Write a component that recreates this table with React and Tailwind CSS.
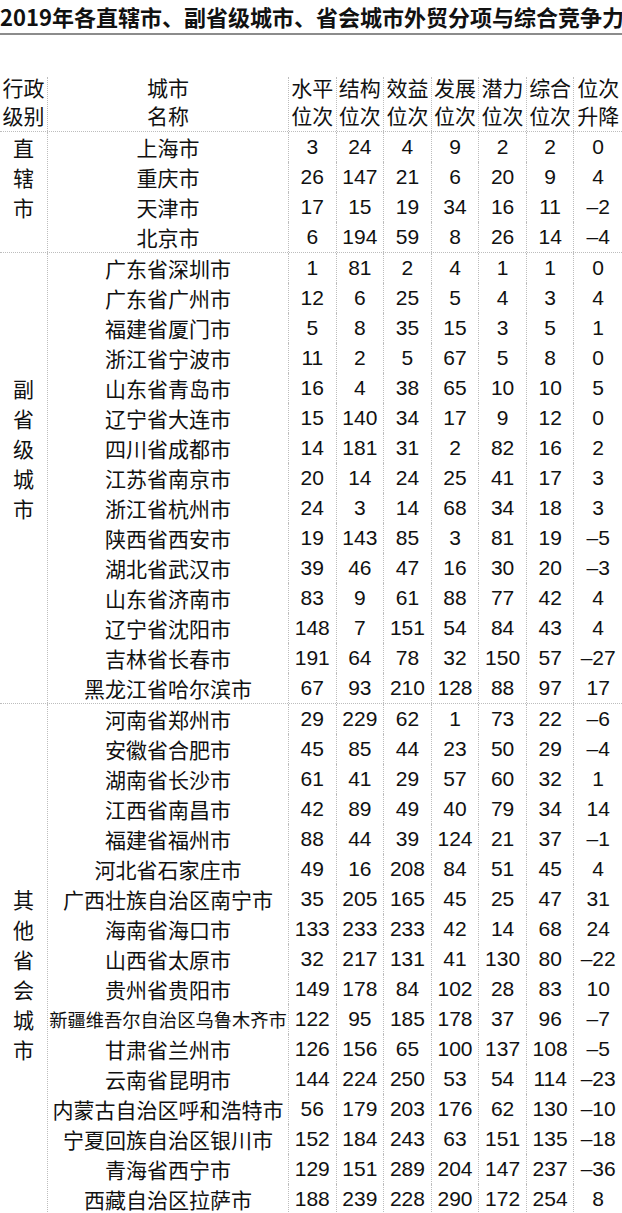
import React from 'react';

// 行政级别分组：label 中每个字占一行，offset 为起始行
const groups = [
    {
        label: '直辖市',
        offset: 0,
        rows: [
            ['上海市', 3, 24, 4, 9, 2, 2, '0'],
            ['重庆市', 26, 147, 21, 6, 20, 9, '4'],
            ['天津市', 17, 15, 19, 34, 16, 11, '–2'],
            ['北京市', 6, 194, 59, 8, 26, 14, '–4'],
        ],
    },
    {
        label: '副省级城市',
        offset: 4,
        rows: [
            ['广东省深圳市', 1, 81, 2, 4, 1, 1, '0'],
            ['广东省广州市', 12, 6, 25, 5, 4, 3, '4'],
            ['福建省厦门市', 5, 8, 35, 15, 3, 5, '1'],
            ['浙江省宁波市', 11, 2, 5, 67, 5, 8, '0'],
            ['山东省青岛市', 16, 4, 38, 65, 10, 10, '5'],
            ['辽宁省大连市', 15, 140, 34, 17, 9, 12, '0'],
            ['四川省成都市', 14, 181, 31, 2, 82, 16, '2'],
            ['江苏省南京市', 20, 14, 24, 25, 41, 17, '3'],
            ['浙江省杭州市', 24, 3, 14, 68, 34, 18, '3'],
            ['陕西省西安市', 19, 143, 85, 3, 81, 19, '–5'],
            ['湖北省武汉市', 39, 46, 47, 16, 30, 20, '–3'],
            ['山东省济南市', 83, 9, 61, 88, 77, 42, '4'],
            ['辽宁省沈阳市', 148, 7, 151, 54, 84, 43, '4'],
            ['吉林省长春市', 191, 64, 78, 32, 150, 57, '–27'],
            ['黑龙江省哈尔滨市', 67, 93, 210, 128, 88, 97, '17'],
        ],
    },
    {
        label: '其他省会城市',
        offset: 6,
        rows: [
            ['河南省郑州市', 29, 229, 62, 1, 73, 22, '–6'],
            ['安徽省合肥市', 45, 85, 44, 23, 50, 29, '–4'],
            ['湖南省长沙市', 61, 41, 29, 57, 60, 32, '1'],
            ['江西省南昌市', 42, 89, 49, 40, 79, 34, '14'],
            ['福建省福州市', 88, 44, 39, 124, 21, 37, '–1'],
            ['河北省石家庄市', 49, 16, 208, 84, 51, 45, '4'],
            ['广西壮族自治区南宁市', 35, 205, 165, 45, 25, 47, '31'],
            ['海南省海口市', 133, 233, 233, 42, 14, 68, '24'],
            ['山西省太原市', 32, 217, 131, 41, 130, 80, '–22'],
            ['贵州省贵阳市', 149, 178, 84, 102, 28, 83, '10'],
            ['新疆维吾尔自治区乌鲁木齐市', 122, 95, 185, 178, 37, 96, '–7'],
            ['甘肃省兰州市', 126, 156, 65, 100, 137, 108, '–5'],
            ['云南省昆明市', 144, 224, 250, 53, 54, 114, '–23'],
            ['内蒙古自治区呼和浩特市', 56, 179, 203, 176, 62, 130, '–10'],
            ['宁夏回族自治区银川市', 152, 184, 243, 63, 151, 135, '–18'],
            ['青海省西宁市', 129, 151, 289, 204, 147, 237, '–36'],
            ['西藏自治区拉萨市', 188, 239, 228, 290, 172, 254, '8'],
        ],
    },
];

const headers = [
    ['水平', '位次'],
    ['结构', '位次'],
    ['效益', '位次'],
    ['发展', '位次'],
    ['潜力', '位次'],
    ['综合', '位次'],
    ['位次', '升降'],
];

const cjk = { fontFamily: '"Noto Sans CJK SC", "Noto Sans", sans-serif' };
const num = { fontFamily: '"Liberation Sans Narrow", "Liberation Sans", "Noto Sans CJK SC", sans-serif' };

export default function App() {
    return (
        <div className="w-[622px] bg-white text-[#111]" style={cjk}>
            {/* Title */}
            <h1 className="text-[22px] font-bold leading-[32px] whitespace-nowrap">
                2019年各直辖市、副省级城市、省会城市外贸分项与综合竞争力
            </h1>
            <div className="h-[2px] mt-[1px] bg-[#8c8c8c]" />

            {/* Header */}
            <div className="mt-[42px] grid grid-cols-[48px_241px_repeat(7,1fr)] h-[55px] border-b border-dotted border-[#bdbdbd] text-[21px] leading-[28px]">
                <div className="border-r border-dotted border-[#bdbdbd] text-center">
                    <div className="-mt-1">行政<br />级别</div>
                </div>
                <div className="border-r border-dotted border-[#bdbdbd] text-center">
                    <div className="-mt-1">城市<br />名称</div>
                </div>
                {headers.map((h, i) => (
                    <div key={i} className={`text-center whitespace-nowrap ${i < 6 ? 'border-r border-dotted border-[#bdbdbd]' : ''}`}>
                        <div className="-mt-1">{h[0]}<br />{h[1]}</div>
                    </div>
                ))}
            </div>

            {/* Body */}
            {groups.map((g, gi) => (
                <div key={gi} className={`flex ${gi < groups.length - 1 ? 'border-b border-dotted border-[#bdbdbd]' : ''}`}>
                    <div className="w-[48px] shrink-0 border-r border-dotted border-[#bdbdbd] flex flex-col items-center text-[21px] leading-[30px]" style={{ paddingTop: g.offset * 30 }}>
                        {g.label.split('').map((c, ci) => <span key={ci}>{c}</span>)}
                    </div>
                    <div className="flex-1">
                        {g.rows.map((r, ri) => (
                            <div key={ri} className="grid grid-cols-[241px_repeat(7,1fr)] h-[30px] leading-[30px]">
                                <div className={`border-r border-dotted border-[#bdbdbd] text-center whitespace-nowrap ${r[0].length > 11 ? 'text-[18.3px]' : 'text-[21px]'}`}>
                                    {r[0]}
                                </div>
                                {r.slice(1).map((v, vi) => (
                                    <div key={vi} className={`text-center text-[21px] ${vi < 6 ? 'border-r border-dotted border-[#bdbdbd]' : ''}`} style={num}>
                                        {v}
                                    </div>
                                ))}
                            </div>
                        ))}
                    </div>
                </div>
            ))}
        </div>
    );
}
